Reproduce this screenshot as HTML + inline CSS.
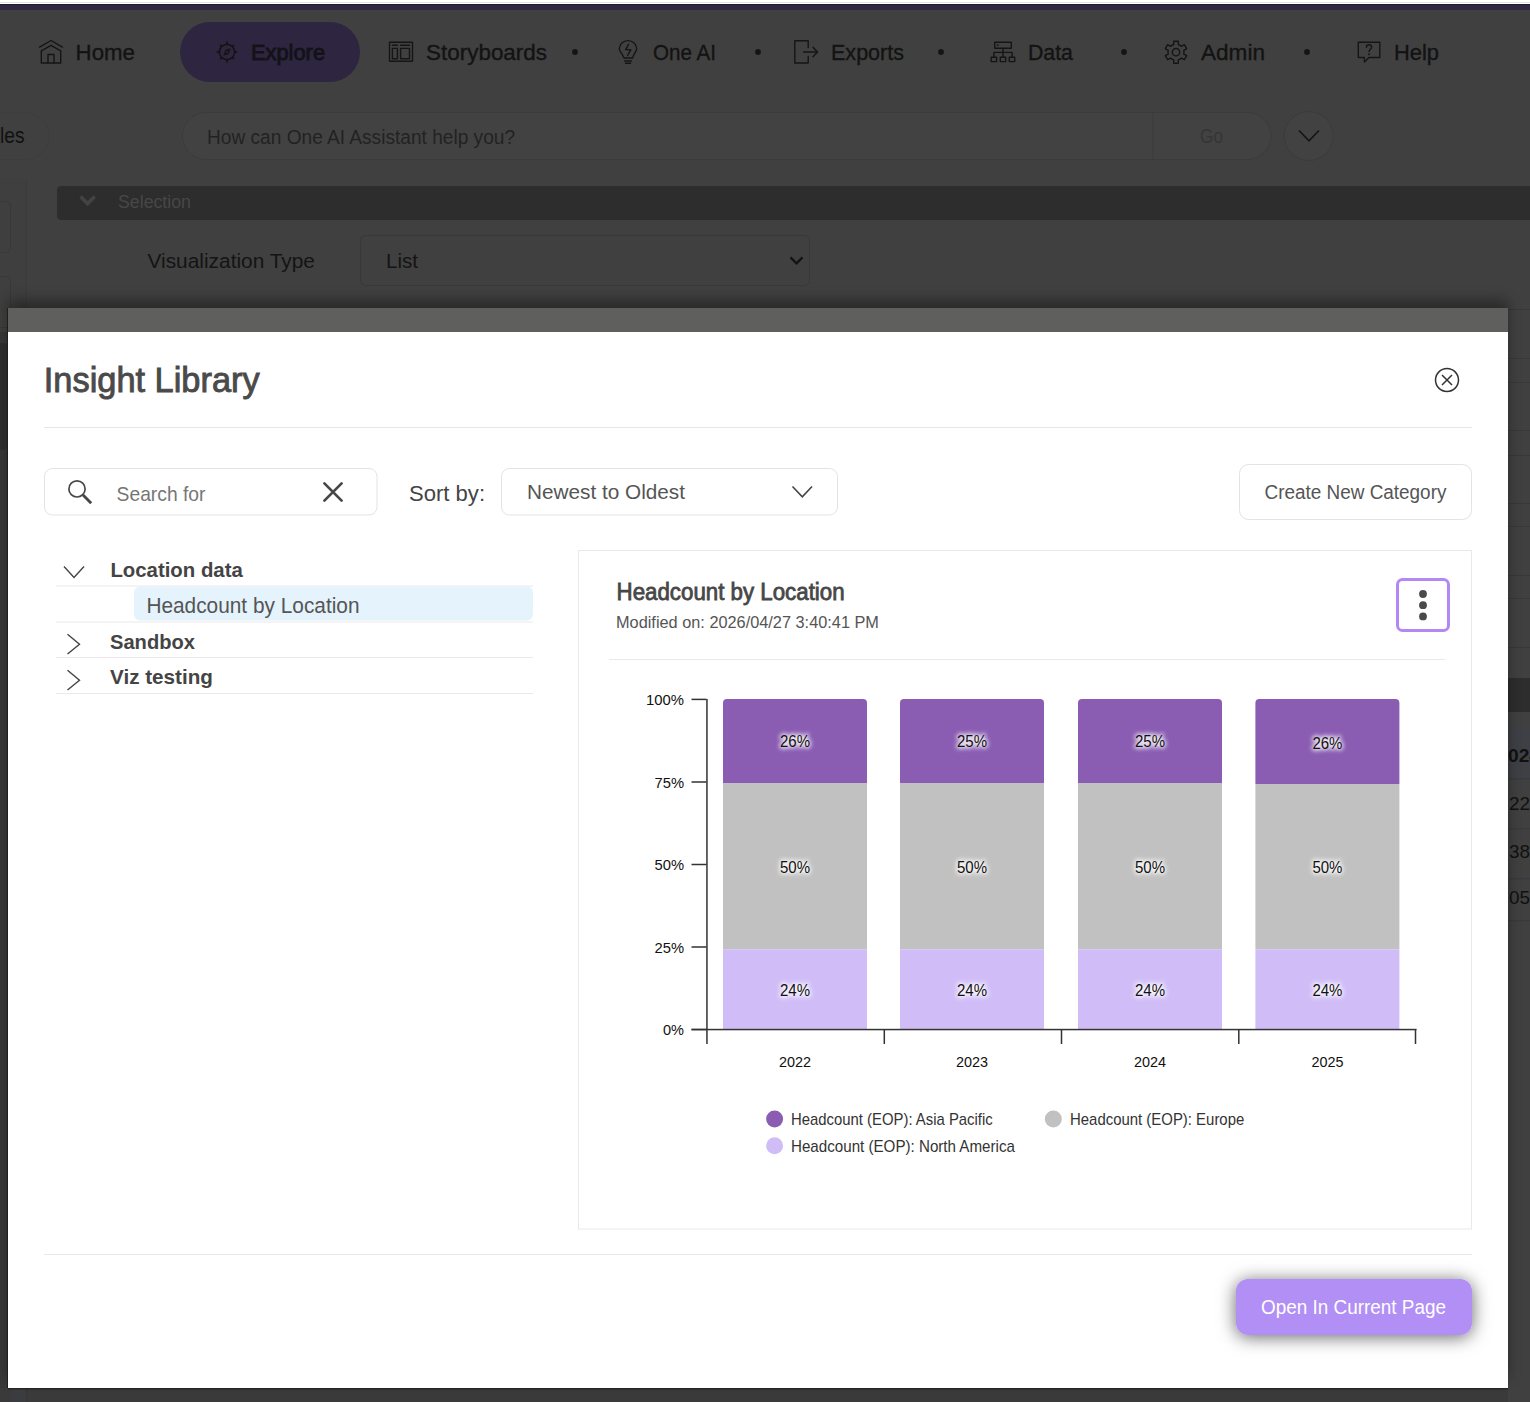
<!DOCTYPE html><html><head><meta charset="utf-8"><style>html,body{margin:0;padding:0;background:#404040;overflow:hidden}</style></head><body><svg width="1530" height="1402" viewBox="0 0 1530 1402" style="display:block;font-family:'Liberation Sans',sans-serif">
<defs>
<filter id="btnsh" x="-30%" y="-60%" width="160%" height="220%"><feDropShadow dx="0" dy="2" stdDeviation="9" flood-color="#000" flood-opacity="0.6"/></filter>
<filter id="halo" x="-30%" y="-50%" width="160%" height="200%"><feMorphology in="SourceAlpha" operator="dilate" radius="0.6" result="d"/><feGaussianBlur in="d" stdDeviation="1.1" result="b"/><feFlood flood-color="#ffffff" flood-opacity="0.55"/><feComposite in2="b" operator="in" result="g"/><feMerge><feMergeNode in="g"/><feMergeNode in="SourceGraphic"/></feMerge></filter>
<filter id="hblur" x="-30%" y="-60%" width="160%" height="220%"><feGaussianBlur stdDeviation="2"/></filter>
<filter id="msh" x="-5%" y="-5%" width="110%" height="110%"><feGaussianBlur stdDeviation="7"/></filter>
<linearGradient id="topsh" x1="0" y1="0" x2="0" y2="1"><stop offset="0" stop-color="#000" stop-opacity="0"/><stop offset="1" stop-color="#000" stop-opacity="0.18"/></linearGradient>
</defs>
<rect x="0" y="0" width="1530" height="1402" fill="#404040"/>
<rect x="0" y="0" width="1530" height="4" fill="#ffffff"/><rect x="0" y="2" width="1530" height="1" fill="#e0e2df"/>
<rect x="0" y="4" width="1530" height="6" fill="#2e2540"/><rect x="0" y="4" width="1530" height="1" fill="#1f1833"/>
<rect x="180" y="22" width="180" height="60" rx="30" fill="#2e2540"/>
<g stroke="#151515" stroke-width="1.4" fill="none" stroke-linejoin="round" stroke-linecap="round"><path d="M39.6 47.1 L51 40.5 L62.4 47.1"/><path d="M41.3 63 V50.8 L51 45.3 L60.7 50.8 V63 Z"/><path d="M48 63 V54.5 H54 V63"/></g>
<g fill="#141414"><circle cx="227" cy="52" r="7.6" fill="none" stroke="#141414" stroke-width="1.5"/><path d="M227 40.6 L228.6 44.6 L225.4 44.6Z M227 63.4 L228.6 59.4 L225.4 59.4Z M215.6 52 L219.6 50.4 L219.6 53.6Z M238.4 52 L234.4 50.4 L234.4 53.6Z"/><path d="M219.3 44.3 l3 1.2 l-1.8 1.8Z M234.7 44.3 l-1.2 3 l-1.8 -1.8Z M219.3 59.7 l1.2 -3 l1.8 1.8Z M234.7 59.7 l-3 -1.2 l1.8 -1.8Z"/><path d="M230.8 48.2 L228.5 54.2 L223.2 55.8 L225.5 49.8Z"/><circle cx="227" cy="52" r="1.1" fill="#2e2540"/></g>
<g stroke="#151515" stroke-width="1.4" fill="none" stroke-linejoin="round" stroke-linecap="round"><rect x="389.5" y="42.2" width="23" height="19.1" rx="0.5"/><path d="M392.4 45.2 H397.4 M400.6 45.2 H409.5"/><rect x="392.4" y="48.4" width="5" height="10.3"/><rect x="400.6" y="48.4" width="8.9" height="10.3"/></g>
<g stroke="#151515" stroke-width="1.4" fill="none" stroke-linejoin="round" stroke-linecap="round"><path d="M624 58 C622 53 619.3 51 619.3 49 C619.3 44 623.2 40.6 628 40.6 C632.8 40.6 636.7 44 636.7 49 C636.7 51 634 53 632.6 58 Z"/><path d="M624.6 61 H631.4 M625.6 63.3 H630.6"/><path d="M628.6 44.3 L625.6 49.6 L630.8 49.8 L627.6 55.5"/></g>
<g stroke="#151515" stroke-width="1.4" fill="none" stroke-linejoin="round" stroke-linecap="round" stroke-linecap="butt" stroke-linejoin="miter"><path d="M808.2 47.6 V40.8 H794.8 V63 H808.2 V56.3"/><path d="M803.6 52 H817.2"/><path d="M813 47.3 L817.5 52 L813 56.7"/></g>
<g stroke="#151515" stroke-width="1.4" fill="none" stroke-linejoin="round" stroke-linecap="round" stroke-linecap="butt" stroke-linejoin="miter"><rect x="994.7" y="42.3" width="16.6" height="5.9"/><path d="M1003 48.2 V57.3 M993.9 57.3 V52.4 H1012.1 V57.3"/><rect x="991.2" y="57.3" width="5.4" height="4.3"/><rect x="1000.3" y="57.3" width="5.4" height="4.3"/><rect x="1009.3" y="57.3" width="5.4" height="4.3"/></g>
<circle cx="997.7" cy="45.2" r="0.9" fill="#151515"/>
<g stroke="#151515" stroke-width="1.4" fill="none" stroke-linejoin="round" stroke-linecap="round" stroke-linejoin="miter"><path d="M1173.70 44.54 L1173.70 41.20 L1178.30 41.20 L1178.30 44.54 A8.0 8.0 0 0 1 1181.49 46.38 L1181.49 46.38 L1184.38 44.71 L1186.68 48.69 L1183.79 50.36 A8.0 8.0 0 0 1 1183.79 54.04 L1183.79 54.04 L1186.68 55.71 L1184.38 59.69 L1181.49 58.02 A8.0 8.0 0 0 1 1178.30 59.86 L1178.30 59.86 L1178.30 63.20 L1173.70 63.20 L1173.70 59.86 A8.0 8.0 0 0 1 1170.51 58.02 L1170.51 58.02 L1167.62 59.69 L1165.32 55.71 L1168.21 54.04 A8.0 8.0 0 0 1 1168.21 50.36 L1168.21 50.36 L1165.32 48.69 L1167.62 44.71 L1170.51 46.38 A8.0 8.0 0 0 1 1173.70 44.54 Z"/><circle cx="1176" cy="52.2" r="3.7"/></g>
<g stroke="#151515" stroke-width="1.4" fill="none" stroke-linejoin="round" stroke-linecap="round" stroke-linejoin="miter"><path d="M1358.3 42.3 H1379.8 V57.5 H1369 L1364.4 62 V57.5 H1358.3 Z"/><path d="M1366.4 47.3 C1366.4 43.8 1371.6 43.8 1371.6 47.3 C1371.6 49.2 1369 49.4 1369 51.6" /></g><circle cx="1369" cy="54.2" r="0.95" fill="#151515"/>
<circle cx="575" cy="52" r="2.9" fill="#141414"/>
<circle cx="758" cy="52" r="2.9" fill="#141414"/>
<circle cx="941" cy="52" r="2.9" fill="#141414"/>
<circle cx="1124" cy="52" r="2.9" fill="#141414"/>
<circle cx="1307" cy="52" r="2.9" fill="#141414"/>
<text x="75.60" y="60.00" font-size="22.60" font-weight="normal" fill="#131313" textLength="59.35" lengthAdjust="spacingAndGlyphs" stroke="#131313" stroke-width="0.35">Home</text>
<text x="251.00" y="60.00" font-size="22.00" font-weight="normal" fill="#141218" textLength="74.02" lengthAdjust="spacingAndGlyphs" stroke="#141218" stroke-width="0.9">Explore</text>
<text x="426.00" y="60.00" font-size="22.60" font-weight="normal" fill="#131313" textLength="121.04" lengthAdjust="spacingAndGlyphs" stroke="#131313" stroke-width="0.35">Storyboards</text>
<text x="653.00" y="60.00" font-size="22.60" font-weight="normal" fill="#131313" textLength="62.95" lengthAdjust="spacingAndGlyphs" stroke="#131313" stroke-width="0.35">One AI</text>
<text x="831.00" y="60.00" font-size="22.60" font-weight="normal" fill="#131313" textLength="73.01" lengthAdjust="spacingAndGlyphs" stroke="#131313" stroke-width="0.35">Exports</text>
<text x="1028.00" y="60.00" font-size="22.60" font-weight="normal" fill="#131313" textLength="44.94" lengthAdjust="spacingAndGlyphs" stroke="#131313" stroke-width="0.35">Data</text>
<text x="1201.00" y="60.00" font-size="22.60" font-weight="normal" fill="#131313" textLength="63.99" lengthAdjust="spacingAndGlyphs" stroke="#131313" stroke-width="0.35">Admin</text>
<text x="1394.00" y="60.00" font-size="22.60" font-weight="normal" fill="#131313" textLength="45.04" lengthAdjust="spacingAndGlyphs" stroke="#131313" stroke-width="0.35">Help</text>
<rect x="0" y="178" width="26" height="1224" fill="#3f3f3f"/>
<rect x="26" y="178" width="1" height="1224" fill="#3a3b40"/>
<rect x="-10" y="201.5" width="20.5" height="51" rx="5" fill="none" stroke="#383838" stroke-width="1"/>
<rect x="-10" y="276.5" width="20.5" height="51" rx="5" fill="none" stroke="#383838" stroke-width="1"/>
<rect x="-60" y="113" width="109" height="46.5" rx="23.25" fill="none" stroke="#3d3d3d" stroke-width="1"/>
<text x="0.00" y="142.60" font-size="22.20" font-weight="normal" fill="#111111" textLength="24.57" lengthAdjust="spacingAndGlyphs" >les</text>
<rect x="182.5" y="112.5" width="1088.5" height="47" rx="23.5" fill="#424242" stroke="#3b3b3b" stroke-width="1"/>
<rect x="1152.5" y="113" width="1" height="46" fill="#3b3b3b"/>
<text x="207.00" y="144.00" font-size="20.00" font-weight="normal" fill="#222222" textLength="308.02" lengthAdjust="spacingAndGlyphs" >How can One AI Assistant help you?</text>
<text x="1200.00" y="142.80" font-size="20.00" font-weight="normal" fill="#353535" textLength="22.98" lengthAdjust="spacingAndGlyphs" >Go</text>
<circle cx="1308.7" cy="136" r="24.5" fill="#424242" stroke="#3b3b3b" stroke-width="1"/>
<path d="M1299 130.5 L1309 140.8 L1319 130.5" fill="none" stroke="#151515" stroke-width="1.6"/>
<rect x="57" y="186" width="1500" height="34" rx="4" fill="#2d2d2d"/>
<path d="M80.5 196.5 L87.6 203.6 L94.7 196.5" fill="none" stroke="#434343" stroke-width="3.6"/>
<text x="118.00" y="207.80" font-size="18.00" font-weight="normal" fill="#474747" textLength="72.98" lengthAdjust="spacingAndGlyphs" >Selection</text>
<text x="147.50" y="267.90" font-size="20.50" font-weight="normal" fill="#141414" textLength="167.48" lengthAdjust="spacingAndGlyphs" >Visualization Type</text>
<rect x="360.5" y="235.5" width="449" height="50" rx="5" fill="none" stroke="#383838" stroke-width="1"/>
<text x="386.00" y="267.90" font-size="20.50" font-weight="normal" fill="#141414" textLength="32.02" lengthAdjust="spacingAndGlyphs" >List</text>
<path d="M790.5 257.3 L796.5 263.3 L802.5 257.3" fill="none" stroke="#141414" stroke-width="2.4"/>
<rect x="1508" y="309" width="22" height="1" fill="#383838"/>
<rect x="1508" y="358" width="22" height="1" fill="#383838"/>
<rect x="1508" y="382" width="22" height="1" fill="#383838"/>
<rect x="1508" y="430" width="22" height="1" fill="#383838"/>
<rect x="1508" y="455" width="22" height="1" fill="#383838"/>
<rect x="1508" y="503" width="22" height="1" fill="#383838"/>
<rect x="1508" y="526" width="22" height="1" fill="#383838"/>
<rect x="1508" y="575" width="22" height="1" fill="#383838"/>
<rect x="1508" y="598" width="22" height="1" fill="#383838"/>
<rect x="1508" y="647" width="22" height="1" fill="#383838"/>
<rect x="1508" y="678" width="22" height="34" fill="#2d2d2d"/>
<rect x="1508" y="727" width="22" height="51" fill="#3f4045"/>
<rect x="1508" y="778" width="22" height="1.5" fill="#393a40"/>
<rect x="1508" y="828" width="22" height="1.5" fill="#393a40"/>
<rect x="1508" y="878" width="22" height="1.5" fill="#393a40"/>
<rect x="1508" y="920" width="22" height="1.5" fill="#393a40"/>
<text x="1508.00" y="762.00" font-size="19.00" font-weight="bold" fill="#111" textLength="31.97" lengthAdjust="spacingAndGlyphs" >024</text>
<text x="1509.00" y="810.00" font-size="19.00" font-weight="normal" fill="#111" textLength="21.04" lengthAdjust="spacingAndGlyphs" >22</text>
<text x="1509.00" y="858.00" font-size="19.00" font-weight="normal" fill="#111" textLength="21.04" lengthAdjust="spacingAndGlyphs" >38</text>
<text x="1509.00" y="904.00" font-size="19.00" font-weight="normal" fill="#111" textLength="21.04" lengthAdjust="spacingAndGlyphs" >05</text>
<rect x="0" y="1388" width="1508" height="14" fill="#3a3a3a"/>
<rect x="0" y="332" width="8" height="1056" fill="#383838"/>
<rect x="-10" y="343" width="18" height="107" rx="5" fill="#2f2f2f"/>
<rect x="8" y="300" width="1500" height="1078" fill="#000" opacity="0.35" filter="url(#msh)"/>
<rect x="11" y="1389" width="15" height="13" fill="#3b3c3f"/><rect x="26" y="1389" width="1.2" height="13" fill="#35363c"/>
<rect x="8" y="1388" width="1500" height="1.5" fill="#222" opacity="0.8"/>
<rect x="7" y="308" width="1" height="1080" fill="#1e1e1e"/>
<rect x="8" y="308" width="1500" height="24" fill="#5f5f5d"/>
<rect x="8" y="332" width="1500" height="1056" fill="#ffffff"/>
<text x="43.80" y="392.00" font-size="34.60" font-weight="normal" fill="#4a4a4a" textLength="215.83" lengthAdjust="spacingAndGlyphs" stroke="#4a4a4a" stroke-width="0.9">Insight Library</text>
<circle cx="1447" cy="380" r="11.5" fill="none" stroke="#333" stroke-width="1.5"/>
<path d="M1442 375 L1452 385 M1452 375 L1442 385" stroke="#333" stroke-width="1.5"/>
<rect x="44" y="427" width="1428" height="1" fill="#e9e5e8"/>
<rect x="44.5" y="468.5" width="332.5" height="46.5" rx="8" fill="#fff" stroke="#e3e3e3" stroke-width="1"/>
<circle cx="77" cy="488.9" r="8.1" fill="none" stroke="#474747" stroke-width="1.7"/><path d="M82.8 494.7 L91.2 503.2" stroke="#474747" stroke-width="2.8"/>
<text x="116.60" y="500.50" font-size="21.00" font-weight="normal" fill="#767676" textLength="88.87" lengthAdjust="spacingAndGlyphs" >Search for</text>
<path d="M324.4 483.4 L341.6 500.6 M341.6 483.4 L324.4 500.6" stroke="#474747" stroke-width="2.7" stroke-linecap="round"/>
<text x="409.00" y="500.50" font-size="22.00" font-weight="normal" fill="#444444" textLength="76.02" lengthAdjust="spacingAndGlyphs" >Sort by:</text>
<rect x="501.5" y="468.5" width="336" height="46.5" rx="8" fill="#fff" stroke="#e3e3e3" stroke-width="1"/>
<text x="527.00" y="499.00" font-size="21.00" font-weight="normal" fill="#555555" textLength="157.99" lengthAdjust="spacingAndGlyphs" >Newest to Oldest</text>
<path d="M792.5 486.5 L802.3 496.8 L812 486.5" fill="none" stroke="#444" stroke-width="1.6"/>
<rect x="1239.5" y="464.5" width="232" height="55" rx="9" fill="#fff" stroke="#e3e3e3" stroke-width="1"/>
<text x="1264.50" y="499.00" font-size="20.00" font-weight="normal" fill="#555555" textLength="181.91" lengthAdjust="spacingAndGlyphs" >Create New Category</text>
<rect x="56" y="585.5" width="477" height="1" fill="#ebe7ea"/>
<rect x="56" y="621.5" width="477" height="1" fill="#ebe7ea"/>
<rect x="56" y="657" width="477" height="1" fill="#ebe7ea"/>
<rect x="56" y="693" width="477" height="1" fill="#ebe7ea"/>
<path d="M64 566.5 L74 577.5 L84 566.5" fill="none" stroke="#444" stroke-width="1.4"/>
<text x="110.40" y="576.60" font-size="21.00" font-weight="bold" fill="#444444" textLength="132.41" lengthAdjust="spacingAndGlyphs" >Location data</text>
<rect x="134" y="586.5" width="399" height="34" rx="6" fill="#e5f3fd"/>
<text x="146.40" y="613.00" font-size="21.20" font-weight="normal" fill="#555555" textLength="213.09" lengthAdjust="spacingAndGlyphs" >Headcount by Location</text>
<path d="M67.5 634.3 L79.5 644.2 L67.5 654" fill="none" stroke="#444" stroke-width="1.4"/>
<text x="110.00" y="648.70" font-size="21.00" font-weight="bold" fill="#444444" textLength="84.96" lengthAdjust="spacingAndGlyphs" >Sandbox</text>
<path d="M67.5 670.3 L79.5 680.2 L67.5 690" fill="none" stroke="#444" stroke-width="1.4"/>
<text x="110.00" y="684.40" font-size="21.00" font-weight="bold" fill="#444444" textLength="102.95" lengthAdjust="spacingAndGlyphs" >Viz testing</text>
<rect x="578.5" y="550.5" width="893" height="678.5" fill="#fff" stroke="#ebe7ea" stroke-width="1"/>
<text x="616.60" y="600.20" font-size="23.00" font-weight="normal" fill="#474747" textLength="227.99" lengthAdjust="spacingAndGlyphs" stroke="#474747" stroke-width="0.8">Headcount by Location</text>
<text x="616.00" y="628.00" font-size="17.00" font-weight="normal" fill="#555555" textLength="262.97" lengthAdjust="spacingAndGlyphs" >Modified on: 2026/04/27 3:40:41 PM</text>
<rect x="1397.5" y="579.5" width="51" height="51" rx="5" fill="#fff" stroke="#b388f5" stroke-width="3"/>
<circle cx="1423" cy="594" r="3.9" fill="#4a4a4a"/>
<circle cx="1423" cy="605.2" r="3.9" fill="#4a4a4a"/>
<circle cx="1423" cy="616.4" r="3.9" fill="#4a4a4a"/>
<rect x="609" y="659" width="836" height="1" fill="#ebe7ea"/>
<path d="M723 783 V703 Q723 699 727 699 H863 Q867 699 867 703 V783 Z" fill="#8a5db3"/>
<rect x="723" y="783" width="144" height="166.29999999999995" fill="#c1c1c1"/>
<rect x="723" y="949.3" width="144" height="80.20000000000005" fill="#d0bdf7"/>
<g filter="url(#hblur)" opacity="0.85"><text x="780.00" y="747.00" font-size="16.00" font-weight="normal" fill="#fff" textLength="30.02" lengthAdjust="spacingAndGlyphs" stroke="#fff" stroke-width="2.8" stroke-linejoin="round">26%</text></g>
<text x="780.00" y="747.00" font-size="16.00" font-weight="normal" fill="#111" textLength="30.02" lengthAdjust="spacingAndGlyphs" >26%</text>
<g filter="url(#hblur)" opacity="0.85"><text x="780.00" y="872.50" font-size="16.00" font-weight="normal" fill="#fff" textLength="30.02" lengthAdjust="spacingAndGlyphs" stroke="#fff" stroke-width="2.8" stroke-linejoin="round">50%</text></g>
<text x="780.00" y="872.50" font-size="16.00" font-weight="normal" fill="#111" textLength="30.02" lengthAdjust="spacingAndGlyphs" >50%</text>
<g filter="url(#hblur)" opacity="0.85"><text x="780.00" y="996.00" font-size="16.00" font-weight="normal" fill="#fff" textLength="30.02" lengthAdjust="spacingAndGlyphs" stroke="#fff" stroke-width="2.8" stroke-linejoin="round">24%</text></g>
<text x="780.00" y="996.00" font-size="16.00" font-weight="normal" fill="#111" textLength="30.02" lengthAdjust="spacingAndGlyphs" >24%</text>
<path d="M900 783 V703 Q900 699 904 699 H1040 Q1044 699 1044 703 V783 Z" fill="#8a5db3"/>
<rect x="900" y="783" width="144" height="166.29999999999995" fill="#c1c1c1"/>
<rect x="900" y="949.3" width="144" height="80.20000000000005" fill="#d0bdf7"/>
<g filter="url(#hblur)" opacity="0.85"><text x="957.00" y="746.80" font-size="16.00" font-weight="normal" fill="#fff" textLength="30.02" lengthAdjust="spacingAndGlyphs" stroke="#fff" stroke-width="2.8" stroke-linejoin="round">25%</text></g>
<text x="957.00" y="746.80" font-size="16.00" font-weight="normal" fill="#111" textLength="30.02" lengthAdjust="spacingAndGlyphs" >25%</text>
<g filter="url(#hblur)" opacity="0.85"><text x="957.00" y="872.50" font-size="16.00" font-weight="normal" fill="#fff" textLength="30.02" lengthAdjust="spacingAndGlyphs" stroke="#fff" stroke-width="2.8" stroke-linejoin="round">50%</text></g>
<text x="957.00" y="872.50" font-size="16.00" font-weight="normal" fill="#111" textLength="30.02" lengthAdjust="spacingAndGlyphs" >50%</text>
<g filter="url(#hblur)" opacity="0.85"><text x="957.00" y="996.00" font-size="16.00" font-weight="normal" fill="#fff" textLength="30.02" lengthAdjust="spacingAndGlyphs" stroke="#fff" stroke-width="2.8" stroke-linejoin="round">24%</text></g>
<text x="957.00" y="996.00" font-size="16.00" font-weight="normal" fill="#111" textLength="30.02" lengthAdjust="spacingAndGlyphs" >24%</text>
<path d="M1078 783 V703 Q1078 699 1082 699 H1218 Q1222 699 1222 703 V783 Z" fill="#8a5db3"/>
<rect x="1078" y="783" width="144" height="166.29999999999995" fill="#c1c1c1"/>
<rect x="1078" y="949.3" width="144" height="80.20000000000005" fill="#d0bdf7"/>
<g filter="url(#hblur)" opacity="0.85"><text x="1135.00" y="746.80" font-size="16.00" font-weight="normal" fill="#fff" textLength="30.02" lengthAdjust="spacingAndGlyphs" stroke="#fff" stroke-width="2.8" stroke-linejoin="round">25%</text></g>
<text x="1135.00" y="746.80" font-size="16.00" font-weight="normal" fill="#111" textLength="30.02" lengthAdjust="spacingAndGlyphs" >25%</text>
<g filter="url(#hblur)" opacity="0.85"><text x="1135.00" y="872.50" font-size="16.00" font-weight="normal" fill="#fff" textLength="30.02" lengthAdjust="spacingAndGlyphs" stroke="#fff" stroke-width="2.8" stroke-linejoin="round">50%</text></g>
<text x="1135.00" y="872.50" font-size="16.00" font-weight="normal" fill="#111" textLength="30.02" lengthAdjust="spacingAndGlyphs" >50%</text>
<g filter="url(#hblur)" opacity="0.85"><text x="1135.00" y="996.00" font-size="16.00" font-weight="normal" fill="#fff" textLength="30.02" lengthAdjust="spacingAndGlyphs" stroke="#fff" stroke-width="2.8" stroke-linejoin="round">24%</text></g>
<text x="1135.00" y="996.00" font-size="16.00" font-weight="normal" fill="#111" textLength="30.02" lengthAdjust="spacingAndGlyphs" >24%</text>
<path d="M1255.4 784 V703 Q1255.4 699 1259.4 699 H1395.4 Q1399.4 699 1399.4 703 V784 Z" fill="#8a5db3"/>
<rect x="1255.4" y="784" width="144" height="165.29999999999995" fill="#c1c1c1"/>
<rect x="1255.4" y="949.3" width="144" height="80.20000000000005" fill="#d0bdf7"/>
<g filter="url(#hblur)" opacity="0.85"><text x="1312.40" y="748.80" font-size="16.00" font-weight="normal" fill="#fff" textLength="30.02" lengthAdjust="spacingAndGlyphs" stroke="#fff" stroke-width="2.8" stroke-linejoin="round">26%</text></g>
<text x="1312.40" y="748.80" font-size="16.00" font-weight="normal" fill="#111" textLength="30.02" lengthAdjust="spacingAndGlyphs" >26%</text>
<g filter="url(#hblur)" opacity="0.85"><text x="1312.40" y="872.50" font-size="16.00" font-weight="normal" fill="#fff" textLength="30.02" lengthAdjust="spacingAndGlyphs" stroke="#fff" stroke-width="2.8" stroke-linejoin="round">50%</text></g>
<text x="1312.40" y="872.50" font-size="16.00" font-weight="normal" fill="#111" textLength="30.02" lengthAdjust="spacingAndGlyphs" >50%</text>
<g filter="url(#hblur)" opacity="0.85"><text x="1312.40" y="996.00" font-size="16.00" font-weight="normal" fill="#fff" textLength="30.02" lengthAdjust="spacingAndGlyphs" stroke="#fff" stroke-width="2.8" stroke-linejoin="round">24%</text></g>
<text x="1312.40" y="996.00" font-size="16.00" font-weight="normal" fill="#111" textLength="30.02" lengthAdjust="spacingAndGlyphs" >24%</text>
<rect x="706.2" y="699" width="1.5" height="345" fill="#333333"/>
<rect x="691.5" y="1028.8" width="725" height="1.5" fill="#333333"/>
<rect x="691.5" y="698.65" width="15" height="1.5" fill="#333333"/>
<text x="646.00" y="705.00" font-size="15.50" font-weight="normal" fill="#111" textLength="37.97" lengthAdjust="spacingAndGlyphs" >100%</text>
<rect x="691.5" y="781.25" width="15" height="1.5" fill="#333333"/>
<text x="654.50" y="787.60" font-size="15.50" font-weight="normal" fill="#111" textLength="29.52" lengthAdjust="spacingAndGlyphs" >75%</text>
<rect x="691.5" y="863.75" width="15" height="1.5" fill="#333333"/>
<text x="654.50" y="870.10" font-size="15.50" font-weight="normal" fill="#111" textLength="29.52" lengthAdjust="spacingAndGlyphs" >50%</text>
<rect x="691.5" y="946.25" width="15" height="1.5" fill="#333333"/>
<text x="654.50" y="952.60" font-size="15.50" font-weight="normal" fill="#111" textLength="29.52" lengthAdjust="spacingAndGlyphs" >25%</text>
<rect x="691.5" y="1028.75" width="15" height="1.5" fill="#333333"/>
<text x="663.00" y="1035.10" font-size="15.50" font-weight="normal" fill="#111" textLength="21.00" lengthAdjust="spacingAndGlyphs" >0%</text>
<rect x="883.55" y="1029" width="1.5" height="15" fill="#333333"/>
<rect x="1060.75" y="1029" width="1.5" height="15" fill="#333333"/>
<rect x="1238.05" y="1029" width="1.5" height="15" fill="#333333"/>
<rect x="1414.75" y="1029" width="1.5" height="15" fill="#333333"/>
<text x="779.00" y="1067.40" font-size="15.50" font-weight="normal" fill="#111" textLength="32.00" lengthAdjust="spacingAndGlyphs" >2022</text>
<text x="956.00" y="1067.40" font-size="15.50" font-weight="normal" fill="#111" textLength="32.00" lengthAdjust="spacingAndGlyphs" >2023</text>
<text x="1134.00" y="1067.40" font-size="15.50" font-weight="normal" fill="#111" textLength="32.00" lengthAdjust="spacingAndGlyphs" >2024</text>
<text x="1311.40" y="1067.40" font-size="15.50" font-weight="normal" fill="#111" textLength="32.00" lengthAdjust="spacingAndGlyphs" >2025</text>
<circle cx="774.6" cy="1119" r="8.5" fill="#8a5db3"/><circle cx="1053.3" cy="1119" r="8.5" fill="#c1c1c1"/><circle cx="774.6" cy="1145.7" r="8.5" fill="#d0bdf7"/>
<text x="791.00" y="1125.00" font-size="17.00" font-weight="normal" fill="#333333" textLength="201.73" lengthAdjust="spacingAndGlyphs" >Headcount (EOP): Asia Pacific</text>
<text x="1070.00" y="1125.00" font-size="17.00" font-weight="normal" fill="#333333" textLength="174.27" lengthAdjust="spacingAndGlyphs" >Headcount (EOP): Europe</text>
<text x="791.00" y="1151.70" font-size="17.00" font-weight="normal" fill="#333333" textLength="223.91" lengthAdjust="spacingAndGlyphs" >Headcount (EOP): North America</text>
<rect x="44" y="1254" width="1428" height="1" fill="#ebe6ea"/>
<rect x="1236" y="1279" width="236" height="56" rx="12" fill="#b28ff5" filter="url(#btnsh)"/>
<text x="1261.00" y="1314.00" font-size="20.00" font-weight="normal" fill="#ffffff" textLength="184.98" lengthAdjust="spacingAndGlyphs" >Open In Current Page</text>
</svg></body></html>
